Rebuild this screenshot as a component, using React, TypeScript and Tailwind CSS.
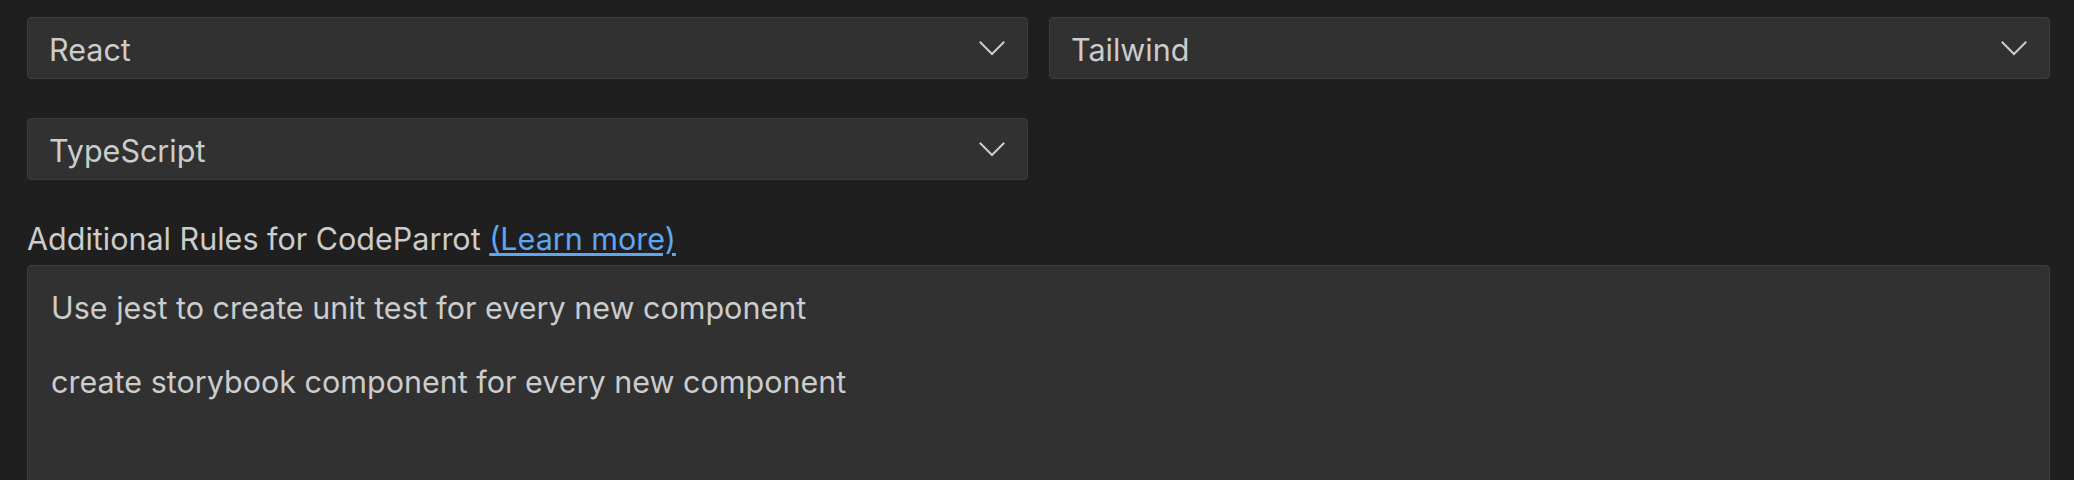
import React from "react";

function Chevron() {
  return (
    <svg width="26" height="15" viewBox="0 0 26 15" fill="none" className="shrink-0">
      <path d="M1.5 1.5 L13 13 L24.5 1.5" stroke="#cccccc" strokeWidth="2" strokeLinecap="square" />
    </svg>
  );
}

function Select({ label }: { label: string }) {
  return (
    <div className="flex h-[62px] items-center justify-between rounded-[4px] border border-[#3c3c3c] bg-[#313131] pl-[21px] pr-[22px]">
      <span className="leading-[37px] pt-[2px]">{label}</span>
      <Chevron />
    </div>
  );
}

export default function App() {
  return (
    <div className="min-h-screen bg-[#1f1f1f] pl-[27px] pr-[24px] pt-[17px] font-['Inter','Noto_Sans',sans-serif] text-[30.5px] leading-[37px] text-[#cccccc]">
      <div className="grid grid-cols-2 gap-x-[21px] gap-y-[39px]">
        <Select label="React" />
        <Select label="Tailwind" />
        <Select label="TypeScript" />
      </div>
      <div className="mt-[40px] leading-[37px]">
        Additional Rules for CodeParrot{" "}
        <a href="#" className="text-[#5ea7f0] underline underline-offset-[3px]">
          (Learn more)
        </a>
      </div>
      <div className="mt-[8px] h-[260px] rounded-[4px] border border-[#3c3c3c] bg-[#313131] px-[23px] pt-[23px] leading-[37px] whitespace-pre-wrap">
        {"Use jest to create unit test for every new component\n\ncreate storybook component for every new component"}
      </div>
    </div>
  );
}
